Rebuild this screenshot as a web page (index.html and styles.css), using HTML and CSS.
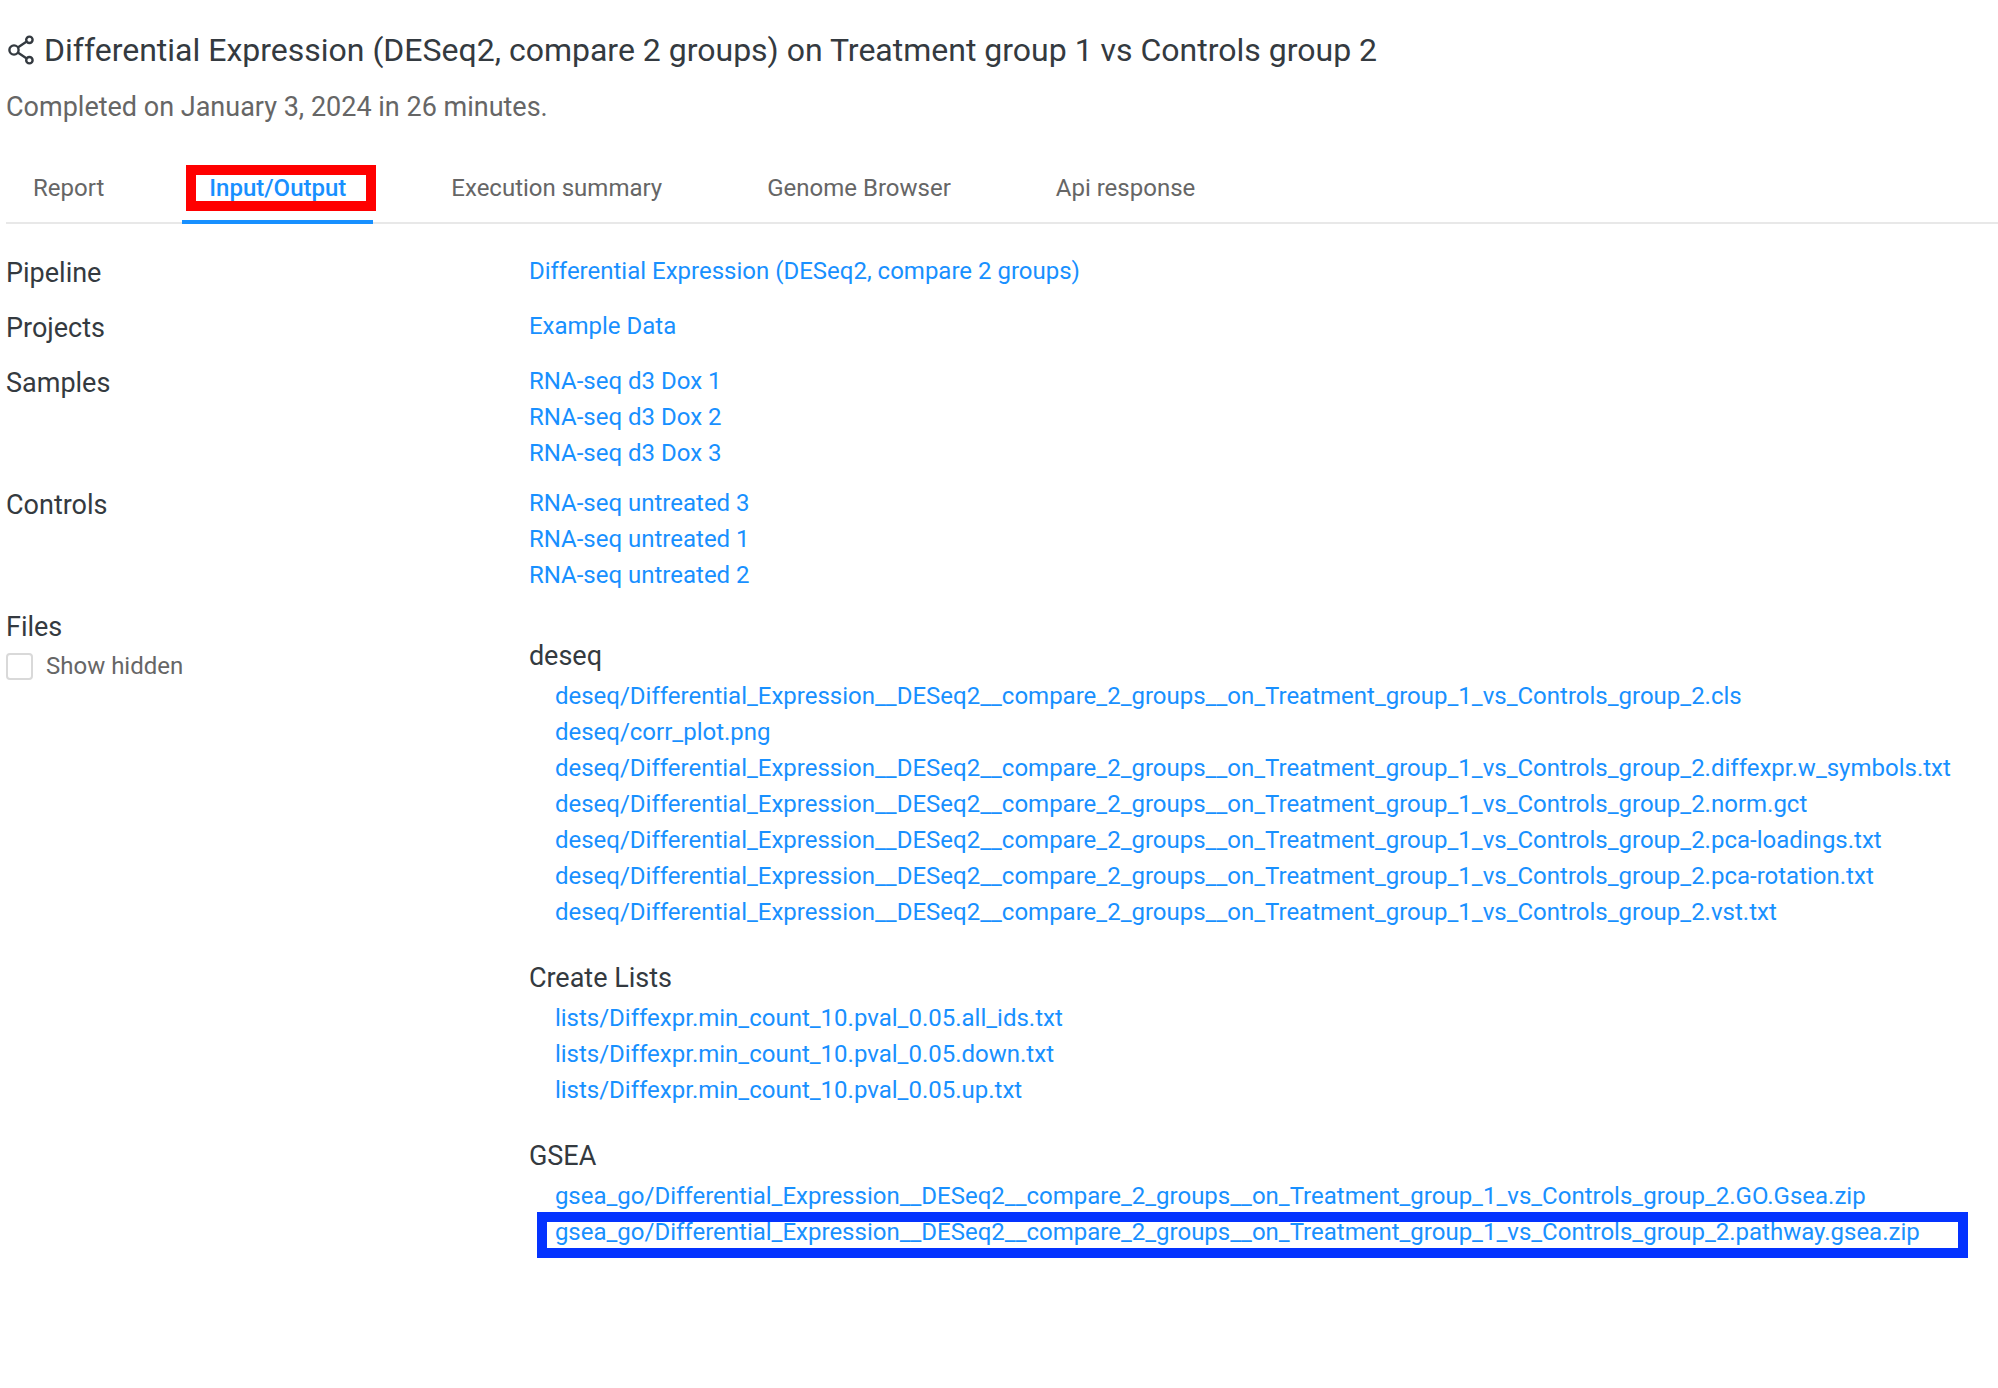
FILE: index.html
```html
<!DOCTYPE html>
<html lang="en">
<head>
<meta charset="utf-8">
<title>Differential Expression (DESeq2, compare 2 groups)</title>
<link rel="stylesheet" href="styles.css">
</head>
<body>
<main class="page">
  <header class="header">
    <h1 class="title">
      <svg class="title-icon" viewBox="0 0 26 30" aria-hidden="true">
        <g fill="none" stroke="currentColor" stroke-width="2.4">
          <circle cx="6" cy="15" r="4.6"/>
          <circle cx="21.4" cy="4.8" r="3.2"/>
          <circle cx="21.4" cy="25.2" r="3.2"/>
          <path d="M9.8 12.4 18.7 6.6M9.8 17.6l8.9 5.8"/>
        </g>
      </svg>
      <span>Differential Expression (DESeq2, compare 2 groups) on Treatment group 1 vs Controls group 2</span>
    </h1>
    <p class="subtitle">Completed on January 3, 2024 in 26 minutes.</p>
  </header>

  <nav class="tabs">
    <a class="tab" href="#report">Report</a>
    <a class="tab tab-active" href="#io" aria-current="page">Input/Output</a>
    <a class="tab" href="#summary">Execution summary</a>
    <a class="tab" href="#genome">Genome Browser</a>
    <a class="tab" href="#api">Api response</a>
  </nav>

  <section class="details">
    <div class="row">
      <h2 class="label">Pipeline</h2>
      <ul class="links"><li><a href="#p">Differential Expression (DESeq2, compare 2 groups)</a></li></ul>
    </div>
    <div class="row">
      <h2 class="label">Projects</h2>
      <ul class="links"><li><a href="#e">Example Data</a></li></ul>
    </div>
    <div class="row">
      <h2 class="label">Samples</h2>
      <ul class="links">
        <li><a href="#s1">RNA-seq d3 Dox 1</a></li>
        <li><a href="#s2">RNA-seq d3 Dox 2</a></li>
        <li><a href="#s3">RNA-seq d3 Dox 3</a></li>
      </ul>
    </div>
    <div class="row">
      <h2 class="label">Controls</h2>
      <ul class="links">
        <li><a href="#c3">RNA-seq untreated 3</a></li>
        <li><a href="#c1">RNA-seq untreated 1</a></li>
        <li><a href="#c2">RNA-seq untreated 2</a></li>
      </ul>
    </div>
    <div class="row">
      <div>
        <h2 class="label">Files</h2>
        <label class="check"><input class="check-box" type="checkbox">Show hidden</label>
      </div>
      <div class="groups">
        <section>
          <h3 class="label">deseq</h3>
          <ul class="links files">
            <li><a href="#f1">deseq/Differential_Expression__DESeq2__compare_2_groups__on_Treatment_group_1_vs_Controls_group_2.cls</a></li>
            <li><a href="#f2">deseq/corr_plot.png</a></li>
            <li><a href="#f3">deseq/Differential_Expression__DESeq2__compare_2_groups__on_Treatment_group_1_vs_Controls_group_2.diffexpr.w_symbols.txt</a></li>
            <li><a href="#f4">deseq/Differential_Expression__DESeq2__compare_2_groups__on_Treatment_group_1_vs_Controls_group_2.norm.gct</a></li>
            <li><a href="#f5">deseq/Differential_Expression__DESeq2__compare_2_groups__on_Treatment_group_1_vs_Controls_group_2.pca-loadings.txt</a></li>
            <li><a href="#f6">deseq/Differential_Expression__DESeq2__compare_2_groups__on_Treatment_group_1_vs_Controls_group_2.pca-rotation.txt</a></li>
            <li><a href="#f7">deseq/Differential_Expression__DESeq2__compare_2_groups__on_Treatment_group_1_vs_Controls_group_2.vst.txt</a></li>
          </ul>
        </section>
        <section>
          <h3 class="label">Create Lists</h3>
          <ul class="links files">
            <li><a href="#l1">lists/Diffexpr.min_count_10.pval_0.05.all_ids.txt</a></li>
            <li><a href="#l2">lists/Diffexpr.min_count_10.pval_0.05.down.txt</a></li>
            <li><a href="#l3">lists/Diffexpr.min_count_10.pval_0.05.up.txt</a></li>
          </ul>
        </section>
        <section>
          <h3 class="label">GSEA</h3>
          <ul class="links files">
            <li><a href="#g1">gsea_go/Differential_Expression__DESeq2__compare_2_groups__on_Treatment_group_1_vs_Controls_group_2.GO.Gsea.zip</a></li>
            <li class="marked"><a href="#g2">gsea_go/Differential_Expression__DESeq2__compare_2_groups__on_Treatment_group_1_vs_Controls_group_2.pathway.gsea.zip</a></li>
          </ul>
        </section>
      </div>
    </div>
  </section>
</main>
</body>
</html>
```
FILE: styles.css
```css
* { box-sizing: border-box; }

body {
  margin: 0;
  background: #fff;
  color: #666;
  font: 24px/36px Roboto, "Liberation Sans", sans-serif;
}

h1, h2, h3, p, ul { margin: 0; padding: 0; font-weight: 400; }
ul { list-style: none; }
a { color: #1890ff; text-decoration: none; }

.page { padding: 26px 0 26px 6px; }

.title {
  display: flex;
  align-items: center;
  gap: 10px;
  padding-left: 2px;
  color: #343a40;
  font-size: 32px;
  line-height: 48px;
}
.title-icon { flex: none; width: 26px; height: 30px; }

.subtitle { margin-top: 12px; font-size: 27px; line-height: 42px; }

.tabs {
  display: flex;
  gap: 51px;
  margin-top: 26px;
  border-bottom: 2px solid #e8e8e8;
}
.tab {
  position: relative;
  margin-bottom: -2px;
  padding: 16px 27px 14px;
  border-bottom: 4px solid transparent;
  color: #666;
  white-space: nowrap;
}
.tab-active { border-bottom-color: #1890ff; color: #1890ff; font-weight: 500; }
.tab-active::after {
  content: "";
  position: absolute;
  inset: 11px -3px 9px 4px;
  border: 10px solid #f00;
}

.details { display: grid; gap: 14px; margin-top: 29px; }
.row { display: grid; grid-template-columns: minmax(0, 21fr) minmax(0, 59fr); }
.label { color: #343a40; font-size: 27px; line-height: 41px; }
.links { white-space: nowrap; }
.files { margin-top: 1px; padding-left: 26px; }

.check { display: flex; align-items: center; gap: 13px; }
.check-box {
  appearance: none;
  width: 27px;
  height: 27px;
  margin: 0;
  border: 2px solid #d9d9d9;
  border-radius: 4px;
  background: #fff;
}

.groups { display: grid; gap: 28px; padding-top: 29px; }

.marked { position: relative; width: max-content; }
.marked::after {
  content: "";
  position: absolute;
  inset: -2px -48px -8px -18px;
  border: 10px solid #0433ff;
}
```
